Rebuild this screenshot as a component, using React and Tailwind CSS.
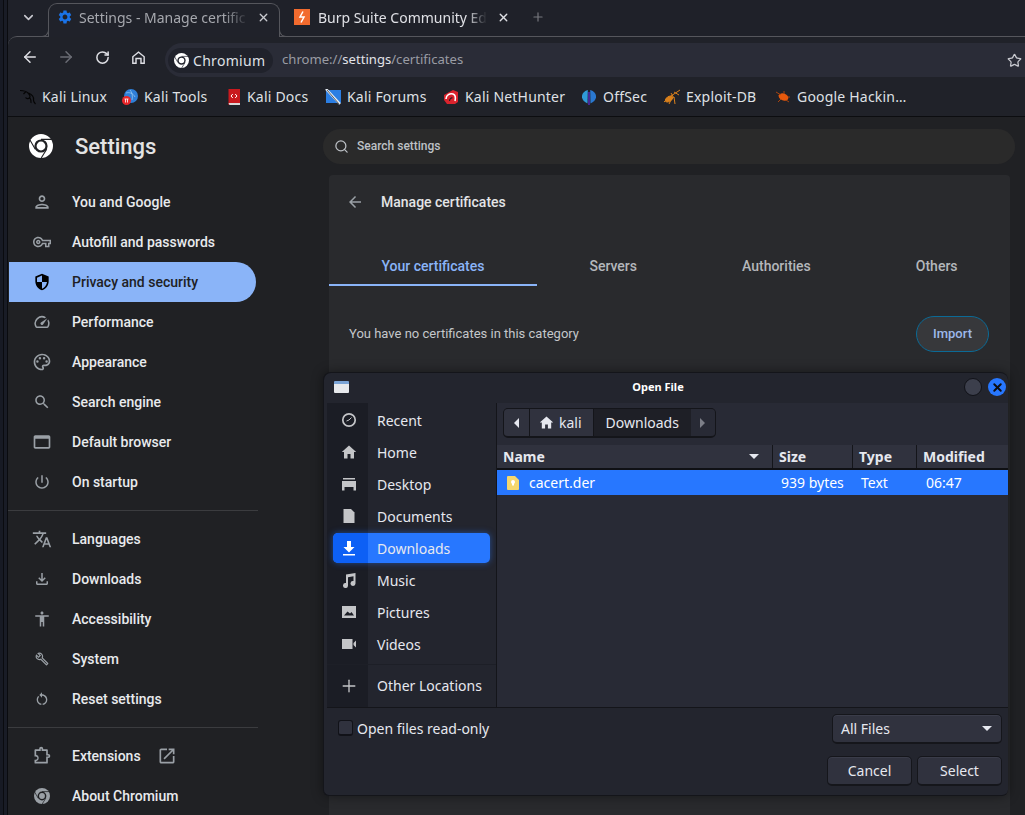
import React from 'react';
import { ArrowLeft, ArrowRight, RotateCw, Star, ChevronDown, X, Plus, Search } from 'lucide-react';

const ui = { fontFamily: '"Noto Sans", sans-serif' };
const roboto = { fontFamily: 'Roboto, sans-serif' };

// material icon paths
const P = {
  person: 'M12 6c1.1 0 2 .9 2 2s-.9 2-2 2-2-.9-2-2 .9-2 2-2m0 10c2.7 0 5.8 1.29 6 2H6c.23-.72 3.31-2 6-2m0-12C9.79 4 8 5.79 8 8s1.79 4 4 4 4-1.79 4-4-1.79-4-4-4zm0 10c-2.67 0-8 1.34-8 4v2h16v-2c0-2.66-5.33-4-8-4z',
  key: 'M22 19h-6v-4h-2.68c-1.14 2.42-3.6 4-6.32 4-3.86 0-7-3.14-7-7s3.14-7 7-7c2.72 0 5.17 1.58 6.32 4H24v6h-2v4zm-4-2h2v-4h2v-2H11.94l-.23-.67C11.01 8.34 9.11 7 7 7c-2.76 0-5 2.24-5 5s2.24 5 5 5c2.11 0 4.01-1.34 4.71-3.33l.23-.67H18v4zM7 15c-1.65 0-3-1.35-3-3s1.35-3 3-3 3 1.35 3 3-1.35 3-3 3zm0-4c-.55 0-1 .45-1 1s.45 1 1 1 1-.45 1-1-.45-1-1-1z',
  shield: 'M12 2L4 5.500V11c0 5 3.400 9.600 8 11 4.600-1.400 8-6 8-11V5.500zM6 6.800l6-2.600V12H6zM12 12h6c-.5 3.800-2.900 7-6 8z',
  speed: 'M20.38 8.57l-1.23 1.85a8 8 0 0 1-.22 7.58H5.07A8 8 0 0 1 15.58 6.85l1.85-1.23A10 10 0 0 0 3.35 19a2 2 0 0 0 1.72 1h13.85a2 2 0 0 0 1.74-1 10 10 0 0 0-.27-10.44zm-9.79 6.84a2 2 0 0 0 2.83 0l5.66-8.49-8.49 5.66a2 2 0 0 0 0 2.83z',
  palette: 'M12 22C6.49 22 2 17.51 2 12S6.49 2 12 2s10 4.04 10 9c0 3.31-2.69 6-6 6h-1.77c-.28 0-.5.22-.5.5 0 .12.05.23.13.33.41.47.64 1.06.64 1.67 0 1.38-1.12 2.5-2.5 2.5zm0-18c-4.41 0-8 3.59-8 8s3.59 8 8 8c.28 0 .5-.22.5-.5 0-.16-.08-.28-.14-.35-.41-.46-.63-1.05-.63-1.65 0-1.38 1.12-2.5 2.5-2.5H16c2.21 0 4-1.79 4-4 0-3.86-3.59-7-8-7zM6.5 10a1.5 1.5 0 1 1 0 3 1.5 1.5 0 0 1 0-3zm3-4a1.5 1.5 0 1 1 0 3 1.5 1.5 0 0 1 0-3zm5 0a1.5 1.5 0 1 1 0 3 1.5 1.5 0 0 1 0-3zm3 4a1.5 1.5 0 1 1 0 3 1.5 1.5 0 0 1 0-3z',
  search: 'M15.5 14h-.79l-.28-.27C15.41 12.59 16 11.11 16 9.5 16 5.91 13.09 3 9.5 3S3 5.91 3 9.5 5.91 16 9.5 16c1.61 0 3.09-.59 4.23-1.57l.27.28v.79l5 4.99L20.49 19l-4.99-5zm-6 0C7.01 14 5 11.99 5 9.5S7.01 5 9.5 5 14 7.01 14 9.5 11.99 14 9.5 14z',
  web: 'M20 4H4c-1.11 0-2 .9-2 2v12c0 1.1.89 2 2 2h16c1.1 0 2-.9 2-2V6c0-1.1-.89-2-2-2zm0 14H4V8h16v10z',
  power: 'M13 3h-2v10h2V3zm4.83 2.17l-1.42 1.42C17.99 7.86 19 9.81 19 12c0 3.87-3.13 7-7 7s-7-3.13-7-7c0-2.19 1.01-4.14 2.58-5.42L6.17 5.17C4.23 6.82 3 9.26 3 12c0 4.97 4.03 9 9 9s9-4.03 9-9c0-2.74-1.23-5.18-3.17-6.83z',
  translate: 'M12.87 15.07l-2.54-2.51.03-.03c1.74-1.94 2.98-4.17 3.71-6.53H17V4h-7V2H8v2H1v1.99h11.17C11.5 7.92 10.44 9.75 9 11.35 8.07 10.32 7.3 9.19 6.69 8h-2c.73 1.63 1.73 3.17 2.98 4.56l-5.09 5.02L4 19l5-5 3.11 3.11.76-2.04zM18.5 10h-2L12 22h2l1.12-3h4.75L21 22h2l-4.5-12zm-2.62 7l1.62-4.33L19.12 17h-3.24z',
  download: 'M18 15v3H6v-3H4v3c0 1.1.9 2 2 2h12c1.1 0 2-.9 2-2v-3h-2zm-1-4l-1.41-1.41L13 12.17V4h-2v8.17L8.41 9.59 7 11l5 5 5-5z',
  accessibility: 'M12 2c1.1 0 2 .9 2 2s-.9 2-2 2-2-.9-2-2 .9-2 2-2zm9 7h-6v13h-2v-6h-2v6H9V9H3V7h18v2z',
  build: 'M22.61 18.99l-9.08-9.08c.93-2.34.45-5.1-1.44-7C9.79.61 6.21.4 3.66 2.26L7.5 6.11 6.08 7.52 2.25 3.69C.39 6.23.6 9.82 2.9 12.11c1.86 1.86 4.57 2.35 6.89 1.48l9.11 9.11c.39.39 1.02.39 1.41 0l2.3-2.3c.4-.38.4-1.01 0-1.41zm-3 1.6l-9.46-9.46c-.61.45-1.29.72-2 .82-1.36.2-2.79-.21-3.83-1.25C3.37 9.76 2.93 8.5 3 7.26l3.09 3.09 4.24-4.24-3.09-3.09c1.24-.07 2.49.37 3.44 1.31 1.08 1.08 1.49 2.57 1.24 3.96-.12.71-.42 1.37-.88 1.96l9.45 9.45-.88.89z',
  reset: 'M12 5V2L8 6l4 4V7c3.31 0 6 2.69 6 6 0 2.97-2.17 5.43-5 5.91v2.02c3.95-.49 7-3.85 7-7.93 0-4.42-3.58-8-8-8zm-6 8c0-1.65.67-3.15 1.76-4.24L6.34 7.34C4.9 8.79 4 10.79 4 13c0 4.08 3.05 7.44 7 7.93v-2.02c-2.83-.48-5-2.94-5-5.91z',
  // puzzle piece drawn to match the settings sidebar icon
  extension: 'M8.500 3.500a2.500 2.500 0 0 1 5 0V4H18a1 1 0 0 1 1 1v4.500h.5a2.500 2.500 0 0 1 0 5H19V20a1 1 0 0 1-1 1H4a1 1 0 0 1-1-1v-3.500h1.500a2 2 0 0 0 0-4H3V5a1 1 0 0 1 1-1h4.500zM5 6v4.600a4 4 0 0 1 0 7.800V19h12v-6.500h2.500a.5.5 0 0 0 0-1H17V6h-5.500V3.500a.5.5 0 0 0-1 0V6z',
  open: 'M19 19H5V5h7V3H5c-1.11 0-2 .9-2 2v14c0 1.1.89 2 2 2h14c1.1 0 2-.9 2-2v-7h-2v7zM14 3v2h3.59l-9.83 9.83 1.41 1.41L19 6.41V10h2V3h-7z',
  back: 'M20 11H7.83l5.59-5.59L12 4l-8 8 8 8 1.41-1.41L7.83 13H20v-2z',
  homeOutline: 'M12 3L3 10.500V21h6.500v-6.500h5V21H21V10.500zM19 19h-2.500v-6.500h-9V19H5v-7.600l7-5.800 7 5.800z',
  gear: 'M19.14 12.94c.04-.3.06-.61.06-.94 0-.32-.02-.64-.07-.94l2.03-1.58c.18-.14.23-.41.12-.61l-1.92-3.32c-.12-.22-.37-.29-.59-.22l-2.39.96c-.5-.38-1.03-.7-1.62-.94l-.36-2.54c-.04-.24-.24-.41-.48-.41h-3.84c-.24 0-.43.17-.47.41l-.36 2.54c-.59.24-1.13.57-1.62.94l-2.39-.96c-.22-.08-.47 0-.59.22L2.74 8.87c-.12.21-.08.47.12.61l2.03 1.58c-.05.3-.09.63-.09.94s.02.64.07.94l-2.03 1.58c-.18.14-.23.41-.12.61l1.92 3.32c.12.22.37.29.59.22l2.39-.96c.5.38 1.03.7 1.62.94l.36 2.54c.05.24.24.41.48.41h3.84c.24 0 .44-.17.47-.41l.36-2.54c.59-.24 1.13-.56 1.62-.94l2.39.96c.22.08.47 0 .59-.22l1.92-3.32c.12-.22.07-.47-.12-.61l-2.01-1.58zM12 15.6c-1.98 0-3.6-1.62-3.6-3.6s1.62-3.6 3.6-3.6 3.6 1.62 3.6 3.6-1.62 3.6-3.6 3.6z',
};

const Mi = ({ d, className }) => (
  <svg viewBox="0 0 24 24" fill="currentColor" fillRule="evenodd" className={className}><path d={d} /></svg>
);

// chromium logo: ring + three swirl cuts
const ChromeLogo = ({ className, fg = '#fff', bg = '#202124' }) => (
  <svg viewBox="0 0 24 24" className={className}>
    <circle cx="12" cy="12" r="12" fill={fg} />
    <circle cx="12" cy="12" r="6.600" fill={bg} />
    <circle cx="12" cy="12" r="4.400" fill={fg} />
    <path d="M12 5.400H23M6.300 15.300L.8 5.800M17.700 15.300L12.200 24" stroke={bg} strokeWidth="1.100" fill="none" />
  </svg>
);

const Dragon = () => (
  <svg viewBox="0 0 16 16" className="w-4 h-4" fill="none" stroke="#050505" strokeWidth="1.200">
    <path d="M0 1.500c3 0 6 .5 8 2.500 2 1.800 2.500 3.500 1.500 5-1 1-3 .8-4-.5M6 2.500L3.500 5M8.500 4C11 5 14 7.500 13.500 11c-.2 1.500 1 3 2 4M10 9c1 1.500 1.500 3 1 5" />
  </svg>
);
const ToolsIcon = () => (
  <svg viewBox="0 0 16 16" className="w-4 h-4">
    <circle cx="9" cy="7" r="7" fill="#2f7fd8" />
    <path d="M4 4c3-1 7 0 9 4M8 1c2 2 3 6 2 10" stroke="#9fd0f5" strokeWidth=".7" fill="none" />
    <circle cx="4.500" cy="11.500" r="4.500" fill="#e8262a" />
    <path d="M2.500 10h4M3.500 10v3.500M5.500 10v3.500" stroke="#fff" strokeWidth=".8" />
  </svg>
);
const DocsIcon = () => (
  <svg viewBox="0 0 16 16" className="w-4 h-4">
    <path d="M2.500 0H14v14H4v2H2.500z" fill="#c9191e" />
    <path d="M2.500 14H14v2H3.500z" fill="#d8d8d8" />
    <path d="M6.800 5L5 7l1.800 2M9.200 5L11 7 9.200 9" stroke="#fff" strokeWidth="1" fill="none" />
  </svg>
);
const ForumsIcon = () => (
  <svg viewBox="0 0 16 16" className="w-4 h-4">
    <path d="M1 1h15v13H1z" fill="#2b7ee3" />
    <path d="M1 0l14 15" stroke="#e8eef5" strokeWidth="2.400" />
    <path d="M2 1l12 14" stroke="#222" strokeWidth=".7" />
  </svg>
);
const HunterIcon = () => (
  <svg viewBox="0 0 16 16" className="w-4 h-4">
    <path d="M1 6l9-5 5 2v10l-3 2H4L1 11z" fill="#d9232d" />
    <path d="M3 10c0-4 4-6 7-5 2 .8 3 3 2 7" stroke="#fff" strokeWidth="1.600" fill="none" />
    <path d="M6.500 12c0-2 1.500-3.500 3-3" stroke="#222" strokeWidth="1.100" fill="none" />
  </svg>
);
const OffsecIcon = () => (
  <svg viewBox="0 0 16 16" className="w-4 h-4">
    <path d="M6.800 1C3 2 .6 5 1 8.500c.4 2.500 2.500 4.500 5.500 6z" fill="#2f9bd8" />
    <path d="M9.200 1C13 2 15.400 5 15 8.500c-.4 2.500-2.500 4.500-5.500 6z" fill="#2a78d0" />
    <path d="M8 3v13" stroke="#5b2fd0" strokeWidth="1.300" />
  </svg>
);
const SpiderIcon = () => (
  <svg viewBox="0 0 18 16" className="w-[18px] h-4" fill="none" stroke="#d9801c" strokeWidth="1">
    <path d="M1 13L8 7l9-6M3 9l4 3M5 7l4 4M8 4l3 5M11 3l5 3M9 9l-3 6M11 8l1 7" />
    <ellipse cx="6" cy="10" rx="4" ry="2.200" transform="rotate(-35 6 10)" fill="#d9801c" />
  </svg>
);
const BugIcon = () => (
  <svg viewBox="0 0 16 16" className="w-4 h-4">
    <ellipse cx="8.500" cy="8" rx="5" ry="3.500" transform="rotate(20 8.500 8)" fill="#e8590c" />
    <path d="M1 3l5 3M3 13l3-3M9 2v3M14 13l-3-2M15 8h-2" stroke="#b8480c" strokeWidth=".9" />
  </svg>
);

const bookmarks = [
  { label: 'Kali Linux', icon: <Dragon />, gap: 'gap-[6px]', w: 'w-[102px]' },
  { label: 'Kali Tools', icon: <ToolsIcon />, gap: 'gap-[6px]', w: 'w-[104px]' },
  { label: 'Kali Docs', icon: <DocsIcon />, gap: 'gap-[5px]', w: 'w-[99px]' },
  { label: 'Kali Forums', icon: <ForumsIcon />, gap: 'gap-[6px]', w: 'w-[118px]' },
  { label: 'Kali NetHunter', icon: <HunterIcon />, gap: 'gap-[6px]', w: 'w-[138px]' },
  { label: 'OffSec', icon: <OffsecIcon />, gap: 'gap-[6px]', w: 'w-[82px]' },
  { label: 'Exploit-DB', icon: <SpiderIcon />, gap: 'gap-[5px]', w: 'w-[112px]' },
  { label: 'Google Hackin…', icon: <BugIcon />, gap: 'gap-[6px]', w: 'w-[140px]' },
];

const navTop = [
  ['You and Google', P.person],
  ['Autofill and passwords', P.key, false, 'w-[18px] h-[18px] mx-px'],
  ['Privacy and security', P.shield, true],
  ['Performance', P.speed, false, 'w-[18px] h-[18px] mx-px'],
  ['Appearance', P.palette],
  ['Search engine', P.search, false, 'w-[18px] h-[18px] mx-px'],
  ['Default browser', P.web],
  ['On startup', P.power, false, 'w-[18px] h-[18px] mx-px'],
];
const navMid = [
  ['Languages', P.translate],
  ['Downloads', P.download, false, 'w-[18px] h-[18px] mx-px'],
  ['Accessibility', P.accessibility, false, 'w-[18px] h-[18px] mx-px'],
  ['System', P.build, false, 'w-[14px] h-[14px] mx-[3px]'],
  ['Reset settings', P.reset, false, 'w-[16px] h-[16px] mx-[2px]'],
];

const NavItem = ({ label, d, active, size = 'w-5 h-5', icon, children }) => (
  <div className={`h-10 flex items-center pl-[23px] mr-[73px] rounded-r-full text-sm font-medium ${active ? 'bg-[#8ab4f8] text-[#202124]' : 'text-[#e8eaed]'}`}>
    {icon || <Mi d={d} className={`${size} shrink-0 ${active ? 'text-black' : 'text-[#9aa0a6]'}`} />}
    <span className="ml-5">{label}</span>
    {children}
  </div>
);

const placeIcons = {
  Recent: (
    <svg viewBox="0 0 16 16" className="w-4 h-4" fill="none" stroke="#c4c5c8" strokeWidth="1.700">
      <circle cx="8" cy="8" r="6.200" />
      <path d="M5.500 9L8 8l2.500-2.500" strokeWidth="1" />
    </svg>
  ),
  Home: <svg viewBox="0 0 16 16" className="w-4 h-4" fill="#c4c5c8"><path d="M8 1.500L.8 8H3v6.500h3.500V10h3v4.500H13V8h2.200z" /></svg>,
  Desktop: <svg viewBox="0 0 16 16" className="w-4 h-4" fill="#c4c5c8"><path d="M2 2h12v1.500H2zM1 5h14v9.500h-2.500V11h-9v3.500H1z" /></svg>,
  Documents: <svg viewBox="0 0 16 16" className="w-4 h-4" fill="#c4c5c8"><path d="M2.500 1H10l3.500 3.500V15h-11z" /></svg>,
  Downloads: <svg viewBox="0 0 16 16" className="w-4 h-4" fill="#fff"><path d="M6 1h4v6h3.500L8 12.500 2.500 7H6zM2 14h12v1.500H2z" /></svg>,
  Music: <svg viewBox="0 0 16 16" className="w-4 h-4" fill="#c4c5c8"><path d="M5 2.500L14.500 1v10.500a2.500 2.500 0 1 1-2-2.400V4.300L7 5.200v8.300a2.500 2.500 0 1 1-2-2.400z" /></svg>,
  Pictures: <svg viewBox="0 0 16 16" className="w-4 h-4" fill="#c4c5c8"><path fillRule="evenodd" d="M1 2h14v12H1zm2 9.500h10L10.500 8 9 9.500 6.500 7.500z" /></svg>,
  Videos: <svg viewBox="0 0 16 16" className="w-4 h-4" fill="#c4c5c8"><path d="M1 3h10.500v10H1zM12.500 7L15 4.500v7L12.500 9z" /></svg>,
};
const places = ['Recent', 'Home', 'Desktop', 'Documents', 'Downloads', 'Music', 'Pictures', 'Videos'];

const btn = 'rounded-[5px] bg-[#30323e] border border-[#15161b] border-b-2 shadow-[inset_0_1px_0_#3a3c49]';

const FileDialog = () => (
  <div style={ui} className="absolute left-[323px] top-[372px] w-[685px] h-[424px] flex flex-col rounded-t-[8px] rounded-b-[6px] bg-[#23252e] border border-[#14151a] border-r-0 text-[14px] text-[#e6e8ef] shadow-[0_0_12px_rgba(0,0,0,.45)]">
    {/* title bar */}
    <div className="h-[30px] shrink-0 flex items-center relative pl-[10px] pr-[2px] pb-[2px]">
      <div className="w-[15px] h-3 bg-[#e7e9ec] border-t-[3px] border-[#7ba4d6] rounded-[1px]" />
      <span className="absolute left-0 right-[16px] text-center text-[11px] font-bold text-white">Open File</span>
      <div className="ml-auto flex items-center gap-[6px] relative">
        <div className="w-[18px] h-[18px] rounded-full bg-[#3c3f4c] border border-[#111218]" />
        <div className="w-[18px] h-[18px] rounded-full bg-[#2777ff] flex items-center justify-center">
          <X size={13} strokeWidth={3.600} className="text-[#0d0e12]" />
        </div>
      </div>
    </div>

    <div className="flex-1 min-h-0 flex ml-[3px] border-b border-[#14151a]">
      {/* places sidebar */}
      <div className="w-[170px] shrink-0 relative border-r border-[#14151a] bg-[#23252e] flex flex-col pt-px">
        <div className="absolute left-0 top-0 bottom-0 w-[41px] bg-[#1b1d25]" />
        {places.map((name) => {
          const on = name === 'Downloads';
          return (
            <div key={name} className="h-8 relative flex items-center">
              {on && (
                <div className="absolute left-[6px] right-[6px] top-px bottom-px rounded-[5px] bg-[#2777ff] overflow-hidden shadow-[0_0_6px_rgba(39,119,255,.5)]">
                  <div className="w-[35px] h-full bg-[#0d60f5]" />
                </div>
              )}
              <div className="w-[41px] relative flex justify-center shrink-0 pl-[2px]">{placeIcons[name]}</div>
              <span className="ml-[9px] relative">{name}</span>
            </div>
          );
        })}
        <div className="relative border-t border-[#1d1f27] mt-[4px] h-[42px] flex items-center">
          <div className="w-[41px] flex justify-center shrink-0 pl-[2px]"><Plus size={20} strokeWidth={1.600} className="text-[#c4c5c8]" /></div>
          <span className="ml-[9px]">Other Locations</span>
        </div>
      </div>

      {/* file list */}
      <div className="flex-1 min-w-0 flex flex-col bg-[#282a35]">
        <div className="pt-[5px] pl-[6px] pb-[7px] flex">
          <div className="h-[30px] flex rounded-[5px] border border-[#14151a] border-b-2 overflow-hidden bg-[#1f2027]">
            <div className="w-[26px] bg-[#30323e] flex items-center justify-center border-r border-[#14151a]">
              <div className="w-0 h-0 border-y-[5px] border-y-transparent border-r-[5px] border-r-[#e6e8ef]" />
            </div>
            <div className="pl-[9px] pr-[11px] bg-[#30323e] flex items-center gap-[5px] border-r border-[#14151a]">
              <svg viewBox="0 0 16 16" className="w-[15px] h-[15px]" fill="#e6e8ef"><path d="M8 1.500L.8 8H3v6.500h3.500V10h3v4.500H13V8h2.200z" /></svg>
              kali
            </div>
            <div className="pl-[12px] pr-[12px] flex items-center bg-[#1e1f26]">Downloads</div>
            <div className="w-[24px] bg-[#282a35] flex items-center justify-center">
              <div className="w-0 h-0 border-y-[5px] border-y-transparent border-l-[5px] border-l-[#7d7f88]" />
            </div>
          </div>
        </div>
        <div className="h-[25px] shrink-0 flex bg-[#30323e] border-b-2 border-[#0f1014] font-bold">
          <div className="w-[276px] flex items-center pl-[6px] pr-[13px] border-r border-[#14151a] justify-between">
            Name
            <div className="w-0 h-0 border-x-[5px] border-x-transparent border-t-[5px] border-t-[#e6e8ef]" />
          </div>
          <div className="w-[80px] flex items-center pl-[6px] border-r border-[#14151a]">Size</div>
          <div className="w-[64px] flex items-center pl-[6px] border-r border-[#14151a]">Type</div>
          <div className="flex-1 flex items-center pl-[6px]">Modified</div>
        </div>
        <div className="h-[25px] shrink-0 flex items-center bg-[#2777ff] text-white">
          <div className="w-[276px] flex items-center pl-[10px]">
            <svg viewBox="0 0 12 14" className="w-[12px] h-[14px] mr-[10px]">
              <path d="M0 1a1 1 0 0 1 1-1h7l4 4v9a1 1 0 0 1-1 1H1a1 1 0 0 1-1-1z" fill="#f5d76e" />
              <circle cx="6" cy="6" r="2" fill="#fff" /><path d="M5 7h2v2.500H5z" fill="#fff" />
            </svg>
            cacert.der
          </div>
          <div className="w-[80px] pl-[8px]">939 bytes</div>
          <div className="w-[64px] pl-[8px]">Text</div>
          <div className="pl-[9px]">06:47</div>
        </div>
      </div>
    </div>

    {/* footer */}
    <div className="h-[87px] shrink-0 flex justify-between pl-[14px] pr-[6px] pt-[6px]">
      <div className="flex items-start gap-[4px] pt-[3px] h-[24px]">
        <div className="w-[15px] h-[16px] mt-[3px] rounded-[3px] bg-[#30323e] border border-[#111218] border-b-2" />
        <span className="mt-[1px]">Open files read-only</span>
      </div>
      <div className="flex flex-col items-end gap-[12px]">
        <div className={`${btn} w-[170px] h-[30px] flex items-center justify-between pl-[8px] pr-[9px]`}>
          All Files
          <div className="w-0 h-0 border-x-[5px] border-x-transparent border-t-[5px] border-t-[#e6e8ef]" />
        </div>
        <div className="flex gap-[5px]">
          <div className={`${btn} w-[85px] h-[30px] flex items-center justify-center`}>Cancel</div>
          <div className={`${btn} w-[85px] h-[30px] flex items-center justify-center`}>Select</div>
        </div>
      </div>
    </div>
  </div>
);

const tabs = [
  ['Your certificates', true],
  ['Servers'],
  ['Authorities'],
  ['Others'],
];

export default function App() {
  return (
    <div className="relative w-[1025px] h-[815px] overflow-hidden flex bg-[#14161e]">
      {/* strip of desktop left of the window */}
      <div className="w-[8px] shrink-0 flex">
        <div className="w-[3px] bg-[#171a24]" />
        <div className="w-px bg-[#0a0b0f]" />
        <div className="w-[3px] bg-[#191c26]" />
        <div className="w-px bg-[#0a0b0f]" />
      </div>

      <div className="flex-1 min-w-0 flex flex-col bg-[#1f2129]">
        {/* tab strip */}
        <div style={ui} className="h-[36px] shrink-0 flex items-end text-[14px] relative z-10">
          <div className="w-[40px] h-[33px] flex items-center justify-center pb-[4px]">
            <ChevronDown size={15} strokeWidth={2.500} className="text-[#c9cad0]" />
          </div>
          <div className="relative w-[232px] h-[34px] -mb-px flex items-center pl-[8px] pr-[9px] pb-[7px] rounded-t-[9px] border border-b-0 border-[#55565c] bg-[#20222a]">
            <div className="absolute left-[-7px] bottom-0 w-[7px] h-[7px] rounded-br-[7px] border-b border-r border-[#55565c]" />
            <div className="absolute right-[-7px] bottom-0 w-[7px] h-[7px] rounded-bl-[7px] border-b border-l border-[#55565c]" />
            <Mi d={P.gear} className="w-[16px] h-[16px] text-[#1a73e8] shrink-0" />
            <span className="ml-[6px] flex-1 whitespace-nowrap text-[#a6a8ae] [mask-image:linear-gradient(to_right,#000_85%,transparent)]">Settings - Manage certific</span>
            <X size={13} strokeWidth={2.500} className="ml-[8px] text-[#c9cad0] shrink-0" />
          </div>
          <div className="w-[232px] h-[33px] flex items-center pl-[14px] pr-[11px] pb-[5px]">
            <div className="w-4 h-4 shrink-0 bg-[#f26b2e] flex items-center justify-center">
              <svg viewBox="0 0 16 16" className="w-4 h-4" fill="none" stroke="#fff" strokeWidth="1.500"><path d="M9 2.500L6 8h4l-3 5.500" /></svg>
            </div>
            <span className="ml-[8px] flex-1 whitespace-nowrap text-[#dfe0e5] [mask-image:linear-gradient(to_right,#000_88%,transparent)]">Burp Suite Community Ed</span>
            <X size={13} strokeWidth={2.500} className="ml-[10px] text-[#dfe0e5] shrink-0" />
          </div>
          <div className="h-[33px] flex items-center ml-[19px] pb-[5px]">
            <Plus size={14} strokeWidth={2} className="text-[#77787e]" />
          </div>
        </div>

        <div className="flex-1 min-h-0 flex flex-col border-t border-[#55565c] rounded-tl-[9px] bg-[#202229]">
          {/* toolbar */}
          <div style={ui} className="h-[40px] shrink-0 flex items-end">
            <div className="h-[40px] flex items-center w-[157px] shrink-0 pl-[4px]">
              <div className="w-9 flex justify-center"><ArrowLeft size={18} strokeWidth={2} className="text-[#dfe0e5]" /></div>
              <div className="w-9 flex justify-center"><ArrowRight size={18} strokeWidth={2} className="text-[#6a6c74]" /></div>
              <div className="w-9 flex justify-center"><RotateCw size={15} strokeWidth={2.400} className="text-[#dfe0e5]" /></div>
              <div className="w-9 flex justify-center"><Mi d={P.homeOutline} className="w-[17px] h-[17px] text-[#dfe0e5]" /></div>
            </div>
            <div className="flex-1 h-[34px] flex items-center rounded-l-full bg-[#2a2c37] text-[14px] pl-[3px]">
              <div className="h-[25px] w-[105px] rounded-full bg-[#20222b] flex items-center pl-[6px] text-[#dfe0e5] tracking-[0.3px]">
                <ChromeLogo className="w-[15px] h-[15px]" bg="#20222b" />
                <span className="ml-[4px]">Chromium</span>
              </div>
              <span className="ml-[9px] text-[13.100px] text-[#9a9ca4]">chrome://<span className="text-[#e2e3e8]">settings</span>/certificates</span>
              <Star size={15} strokeWidth={2} className="ml-auto mr-[3px] text-[#c9cad0]" />
            </div>
          </div>

          {/* bookmarks */}
          <div style={ui} className="h-[40px] shrink-0 flex items-center pl-[12px] border-b border-[#0c0d10] text-[14px] tracking-[0.2px] text-[#dfe0e5]">
            {bookmarks.map((b) => (
              <div key={b.label} className={`${b.w} shrink-0 flex items-center ${b.gap} whitespace-nowrap`}>
                {b.icon}
                <span>{b.label}</span>
              </div>
            ))}
          </div>

          {/* settings page */}
          <div style={roboto} className="flex-1 min-h-0 bg-[#202124] flex flex-col">
            <div className="h-[58px] shrink-0 flex items-center">
              <ChromeLogo className="w-[24px] h-[24px] ml-[21px]" bg="#202124" />
              <span className="ml-[22px] w-[248px] text-[22px] font-medium text-[#e3e3e3]">Settings</span>
              <div className="w-[692px] h-[35px] rounded-full bg-[#2a2a2a] flex items-center pl-[11px] text-[12px] font-medium text-[#bdc1c6]">
                <Search size={15} strokeWidth={2} className="text-[#bdc1c6]" />
                <span className="ml-[8px]">Search settings</span>
              </div>
            </div>

            <div className="flex-1 min-h-0 flex">
              <nav className="w-[321px] shrink-0 pl-px pt-[7px]">
                {navTop.map(([label, d, active, size]) => <NavItem key={label} label={label} d={d} active={active} size={size} />)}
                <div className="h-px bg-[#3b3c3f] mt-[8px] mb-[8px] mr-[71px] -ml-px" />
                {navMid.map(([label, d, active, size]) => <NavItem key={label} label={label} d={d} size={size} />)}
                <div className="h-px bg-[#3b3c3f] mt-[8px] mb-[8px] mr-[71px] -ml-px" />
                <NavItem label="Extensions" d={P.extension}>
                  <Mi d={P.open} className="w-5 h-5 ml-[16px] text-[#9aa0a6]" />
                </NavItem>
                <NavItem label="About Chromium" icon={<ChromeLogo className="w-[16px] h-[16px] mx-[2px] shrink-0" fg="#9aa0a6" />} />
              </nav>

              <div className="w-[681px] shrink-0 bg-[#292a2d] text-[#e8eaed] rounded-t-[4px] flex flex-col text-[14px]">
                <div className="h-[54px] flex items-center pl-[17px] shrink-0">
                  <Mi d={P.back} className="w-[18px] h-[18px] text-[#9aa0a6]" />
                  <span className="ml-[17px] font-medium text-[#e3e4e6]">Manage certificates</span>
                </div>
                <div className="flex h-[57px] shrink-0">
                  {tabs.map(([label, on]) => (
                    <div key={label} className={`flex-auto flex items-center justify-center pt-[19px] font-medium border-b-2 ${on ? 'text-[#8ab4f8] border-[#8ab4f8]' : 'text-[#b4b7bb] border-transparent'}`}>
                      {label}
                    </div>
                  ))}
                </div>
                <div className="flex items-center justify-between pl-[20px] pr-[21px] pt-[30px] text-[13px] text-[#c4c7ca]">
                  You have no certificates in this category
                  <div className="w-[73px] h-[36px] rounded-full border border-[#0b6a96] bg-[#37383b] flex items-center justify-center font-medium text-[#9db9ea]">Import</div>
                </div>
              </div>
            </div>
          </div>
        </div>
      </div>

      <FileDialog />
    </div>
  );
}
